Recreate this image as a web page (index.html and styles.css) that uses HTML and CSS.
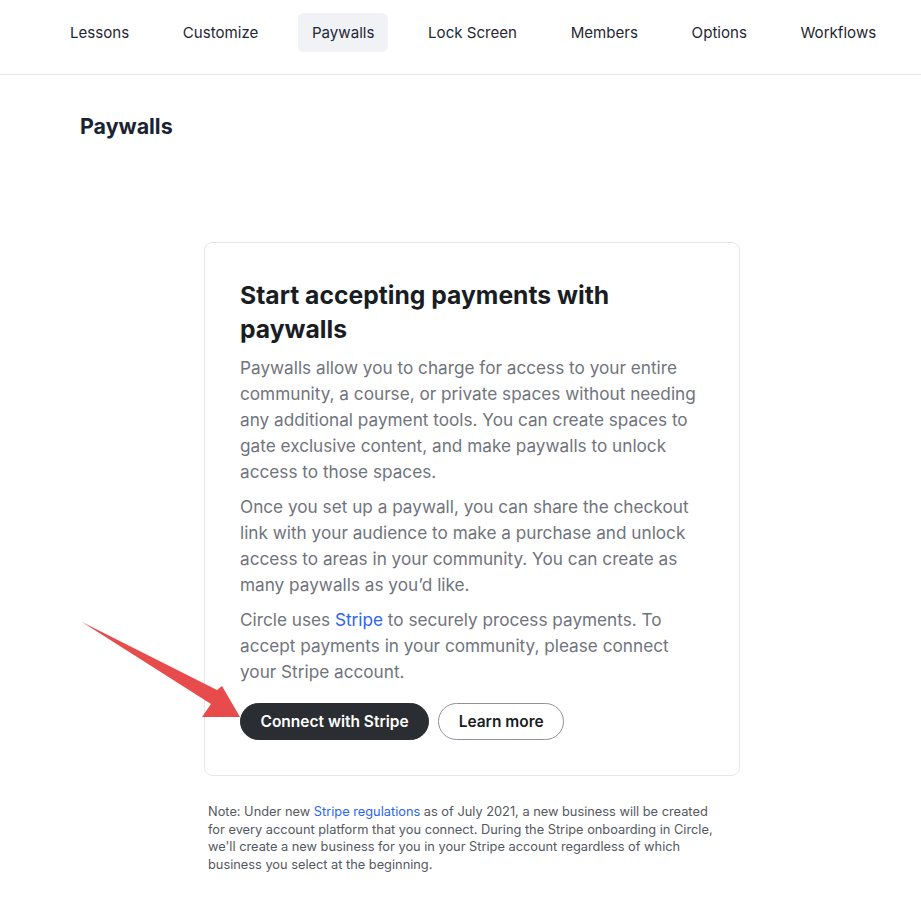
FILE: index.html
```html
<!DOCTYPE html>
<html lang="en">
<head>
    <meta charset="UTF-8">
    <meta name="viewport" content="width=device-width, initial-scale=1.0">
    <title>Paywalls</title>
    <link rel="stylesheet" href="styles.css">
</head>
<body>
    <div class="topnav">
        <a class="nav-item" href="#">Lessons</a>
        <a class="nav-item" href="#">Customize</a>
        <a class="nav-item active" href="#">Paywalls</a>
        <a class="nav-item" href="#">Lock Screen</a>
        <a class="nav-item" href="#">Members</a>
        <a class="nav-item" href="#">Options</a>
        <a class="nav-item" href="#">Workflows</a>
    </div>

    <div class="main">
        <h1 class="page-title">Paywalls</h1>

        <div class="card">
            <h2>Start accepting payments with paywalls</h2>
            <p>Paywalls allow you to charge for access to your entire community, a course, or private spaces without needing any additional payment tools. You can create spaces to gate exclusive content, and make paywalls to unlock access to those spaces.</p>
            <p>Once you set up a paywall, you can share the checkout link with your audience to make a purchase and unlock access to areas in your community. You can create as many paywalls as you’d like.</p>
            <p>Circle uses <a href="#">Stripe</a> to securely process payments. To accept payments in your community, please connect your Stripe account.</p>
            <div class="actions">
                <button class="btn btn-dark">Connect with Stripe</button>
                <button class="btn btn-outline">Learn more</button>
            </div>
        </div>

        <p class="note">Note: Under new <a href="#">Stripe regulations</a> as of July 2021, a new business will be created for every account platform that you connect. During the Stripe onboarding in Circle, we'll create a new business for you in your Stripe account regardless of which business you select at the beginning.</p>
    </div>

    <!-- annotation arrow pointing at the connect button -->
    <svg class="arrow" width="180" height="120" viewBox="0 0 180 120">
        <polygon points="12,12 147,80 152,76 170,107 132,107 141,94" fill="#e84b4b"/>
    </svg>
</body>
</html>
```

FILE: styles.css
```css
body {
    margin: 0;
    font-family: Inter, "Noto Sans", sans-serif;
    color: #1b1f26;
    background: #fff;
    position: relative;
}
a {
    text-decoration: none;
}
.topnav {
    display: flex;
    gap: 25.6px;
    padding: 13px 0 0 56px;
    height: 61px;
    border-bottom: 1px solid #e5e7eb;
}
.nav-item {
    height: 39px;
    line-height: 39px;
    padding: 0 14px;
    border-radius: 6px;
    font-size: 15.1px;
    color: #1f2734;
}
.nav-item.active {
    background: #f0f2f5;
}
.main {
    padding: 0 57px 40px 80px;
}
.page-title {
    margin: 37px 0 102px;
    font-size: 21.4px;
    line-height: 28px;
    font-weight: 700;
    color: #1a2333;
}
.card {
    max-width: 464px;
    margin: 0 auto;
    padding: 35px;
    border: 1px solid #e4e7ec;
    border-radius: 8px;
}
.card h2 {
    margin: 0 0 9px;
    font-size: 24.7px;
    line-height: 34px;
    font-weight: 700;
    color: #191d24;
}
.card p {
    margin: 0 0 9px;
    font-size: 17.2px;
    line-height: 26px;
    color: #70747d;
}
.card a, .note a {
    color: #2a64f2;
}
.actions {
    display: flex;
    gap: 9px;
    margin-top: 18px;
}
.btn {
    height: 37px;
    padding: 0 19.5px;
    border-radius: 999px;
    font-family: Inter, "Noto Sans", sans-serif;
    font-size: 15.5px;
    font-weight: 600;
    cursor: pointer;
}
.btn-dark {
    background: #2a2d31;
    color: #fff;
    border: 1px solid #2a2d31;
}
.btn-outline {
    background: #fff;
    color: #191d24;
    border: 1px solid #8e939b;
}
.note {
    box-sizing: border-box;
    max-width: 536px;
    margin: 27px auto 0;
    padding: 0 22px 0 4px;
    font-size: 12.8px;
    line-height: 17.5px;
    color: #545861;
}
.arrow {
    position: absolute;
    left: 70px;
    top: 610px;
}
```
